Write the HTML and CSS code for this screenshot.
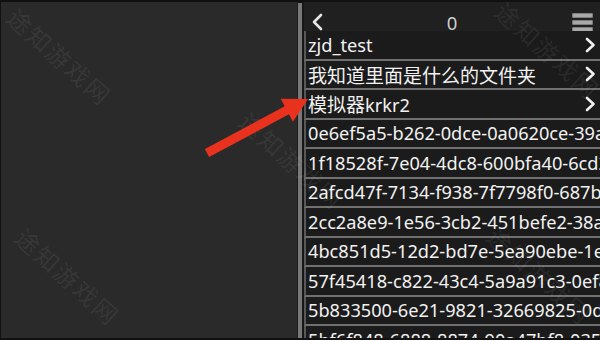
FILE: index.html
```html
<!DOCTYPE html>
<html lang="zh">
<head>
<meta charset="utf-8">
<link rel="stylesheet" href="styles.css">
</head>
<body>
<div class="app">
  <div class="left"></div>
  <div class="divider"></div>
  <div class="right">
    <div class="header">
      <svg class="back" width="14" height="18" viewBox="0 0 14 18"><polyline points="10,2 3,9 10,16" fill="none" stroke="#e6e6e6" stroke-width="2.6" stroke-linecap="round" stroke-linejoin="round"/></svg>
      <span class="count">0</span>
      <div class="menu"><span></span><span></span><span></span></div>
    </div>
    <div class="row"><span class="name">zjd_test</span><svg class="chev" width="12" height="16" viewBox="0 0 12 16"><polyline points="3,2 9.5,8 3,14" fill="none" stroke="#f0f0f0" stroke-width="2.6" stroke-linecap="round" stroke-linejoin="round"/></svg></div>
    <div class="row"><span class="name cjk">我知道里面是什么的文件夹</span><svg class="chev" width="12" height="16" viewBox="0 0 12 16"><polyline points="3,2 9.5,8 3,14" fill="none" stroke="#f0f0f0" stroke-width="2.6" stroke-linecap="round" stroke-linejoin="round"/></svg></div>
    <div class="row"><span class="name"><span class="cjk">模拟器</span>krkr2</span><svg class="chev" width="12" height="16" viewBox="0 0 12 16"><polyline points="3,2 9.5,8 3,14" fill="none" stroke="#f0f0f0" stroke-width="2.6" stroke-linecap="round" stroke-linejoin="round"/></svg></div>
    <div class="row"><span class="name">0e6ef5a5-b262-0dce-0a0620ce-39a</span></div>
    <div class="row"><span class="name">1f18528f-7e04-4dc8-600bfa40-6cd2</span></div>
    <div class="row"><span class="name">2afcd47f-7134-f938-7f7798f0-687b9</span></div>
    <div class="row"><span class="name">2cc2a8e9-1e56-3cb2-451befe2-38a4</span></div>
    <div class="row"><span class="name">4bc851d5-12d2-bd7e-5ea90ebe-1e7</span></div>
    <div class="row"><span class="name">57f45418-c822-43c4-5a9a91c3-0ef8</span></div>
    <div class="row"><span class="name">5b833500-6e21-9821-32669825-0dc</span></div>
    <div class="row"><span class="name">5bf6f848-6888-8874-90a47bf8-035</span></div>
  </div>
</div>

<div class="wm wm1">途知游戏网</div>
<div class="wm wm2">途知游戏网</div>
<div class="wm wm3">途知游戏网</div>
<div class="wm wm4">途知游戏网</div>
<div class="wm wm5">途知游戏网</div>

<svg class="arrow" width="600" height="340" viewBox="0 0 600 340">
  <polygon points="204.9,149 284.7,106.3 280.7,98.8 308,99 292.9,121.8 288.9,114.3 209.1,157" fill="#e9321d"/>
</svg>
</body>
</html>
```

FILE: styles.css
```css
html, body {
  margin: 0;
  padding: 0;
}

body {
  width: 600px;
  height: 340px;
  overflow: hidden;
  position: relative;
  background: #111111;
  font-family: "Noto Sans", "Noto Sans CJK SC", sans-serif;
}

.app {
  display: flex;
  height: 340px;
  box-sizing: border-box;
  padding: 2px 0 2px 1px;
}

.left {
  width: 296px;
  flex: none;
  background: #2a2a2a;
  border-right: 1px solid #1d1d1d;
}

.divider {
  width: 4px;
  flex: none;
  margin-top: 1px;
  background: #787878;
}

.right {
  flex: 1;
  min-width: 0;
  display: flex;
  flex-direction: column;
  overflow: hidden;
  background: #171717;
  padding-left: 2px;
}

.header {
  flex: none;
  height: 29px;
  box-sizing: border-box;
  padding: 9px 7px 0 7px;
  display: grid;
  grid-template-columns: 1fr auto 1fr;
  align-items: center;
  background: #202020;
}

.back {
  display: block;
  margin-top: -1px;
}

.count {
  color: #cfcfcf;
  font-size: 18.5px;
  line-height: 20px;
  margin-top: 2px;
}

.menu {
  justify-self: end;
  display: flex;
  flex-direction: column;
  gap: 2px;
  width: 21px;
}

.menu span {
  display: block;
  height: 5px;
  border-radius: 2px;
  background: #a9a9a9;
  box-shadow: inset 0 0 0 1px #7d7d7d;
}

.row {
  flex: none;
  height: 29.5px;
  box-sizing: border-box;
  display: flex;
  align-items: center;
  padding-left: 2px;
  border-left: 2px solid #585858;
  border-bottom: 2px solid #707070;
  background: #1b1b1b;
  color: #f2f2f2;
  font-size: 18.2px;
  line-height: 1;
  white-space: nowrap;
}

.name {
  flex: none;
}

.cjk {
  font-family: "Noto Sans CJK SC", sans-serif;
  font-size: 19px;
}

.chev {
  display: block;
  margin-left: auto;
  margin-right: 4px;
  flex: none;
}

.wm {
  position: absolute;
  font-family: "Noto Sans CJK SC", sans-serif;
  font-size: 24px;
  letter-spacing: 2px;
  color: rgba(255, 255, 255, 0.07);
  white-space: nowrap;
  transform: translate(-50%, -50%) rotate(42deg);
  pointer-events: none;
}

.wm1 { left: 60px; top: 56px; }
.wm2 { left: 68px; top: 276px; }
.wm3 { left: 292px; top: 160px; }
.wm4 { left: 548px; top: 50px; }
.wm5 { left: 540px; top: 275px; }

.arrow {
  position: absolute;
  left: 0;
  top: 0;
  pointer-events: none;
}
```
